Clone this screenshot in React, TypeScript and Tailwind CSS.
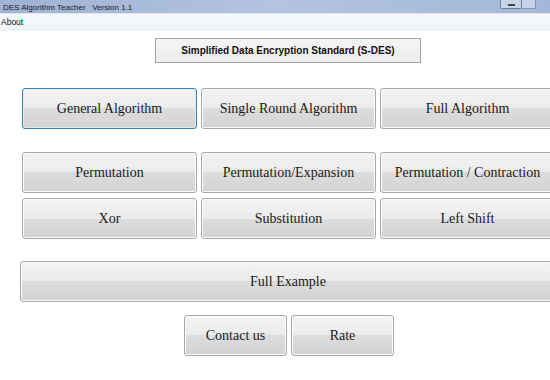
import type { ReactNode } from "react";

function WinButton({
  children,
  focused = false,
  className = "",
}: {
  children: ReactNode;
  focused?: boolean;
  className?: string;
}) {
  return (
    <button
      className={
        "flex h-[41px] items-center justify-center rounded-[3px] border bg-[linear-gradient(#f3f3f3_0%,#ebebeb_50%,#dddddd_50%,#d2d2d2_100%)] font-['Liberation_Serif',serif] text-[14px] text-[#1a1a1a] " +
        (focused
          ? "border-[#3c7fb1] shadow-[inset_0_0_0_1px_#dcecf5] "
          : "border-[#a8a8a8] shadow-[inset_0_0_0_1px_#fbfbfb] ") +
        className
      }
    >
      {children}
    </button>
  );
}

export default function App() {
  return (
    <div className="h-[380px] w-[550px] overflow-hidden bg-white">
      {/* title bar */}
      <div className="relative flex h-[13px] items-end bg-[linear-gradient(90deg,#9fb2d4,#b2c4e0_50%,#a3b7d8)] pl-[3px]">
        <span className="font-['Liberation_Sans',sans-serif] text-[8px] leading-[11px] text-[#1b1b1b]">
          DES Algorithm Teacher&nbsp;&nbsp; Version 1.1
        </span>
        <div className="absolute right-[14px] top-0 flex h-[9px]">
          <div className="flex w-[22px] items-end justify-center rounded-b-[2px] border border-t-0 border-[#6e7f9c] bg-[#c6d3e8] pb-[2px]">
            <div className="h-[2px] w-[7px] border border-[#444] bg-white" />
          </div>
          <div className="w-[14px] rounded-b-[2px] border border-l-0 border-t-0 border-[#8797b2] bg-[#c6d3e8]" />
        </div>
      </div>
      {/* menu bar */}
      <div className="flex h-[18px] items-center border-t border-[#dfe6ef] bg-[linear-gradient(#f6f8fb,#eef1f6)] font-['Liberation_Sans',sans-serif] text-[8.5px] text-[#111]">
        <span className="pl-[1px]">About</span>
      </div>

      <div className="flex justify-center pl-[26px] pt-[7px]">
        <div className="flex h-[25px] w-[266px] items-center justify-center border border-[#a0a0a0] bg-[linear-gradient(#f5f5f5,#ececec)] font-['Liberation_Sans',sans-serif] text-[10px] font-bold text-[#111]">
          Simplified Data Encryption Standard (S-DES)
        </div>
      </div>

      <div className="grid w-[600px] grid-cols-[175px_175px_175px] gap-x-[4px] pl-[22px] pt-[25px]">
        <WinButton focused>General Algorithm</WinButton>
        <WinButton>Single Round Algorithm</WinButton>
        <WinButton>Full Algorithm</WinButton>
      </div>

      <div className="grid w-[600px] grid-cols-[175px_175px_175px] gap-x-[4px] gap-y-[5px] pl-[22px] pt-[23px]">
        <WinButton>Permutation</WinButton>
        <WinButton>Permutation/Expansion</WinButton>
        <WinButton>Permutation / Contraction</WinButton>
        <WinButton>Xor</WinButton>
        <WinButton>Substitution</WinButton>
        <WinButton>Left Shift</WinButton>
      </div>

      <div className="w-[600px] pl-[20px] pt-[22px]">
        <WinButton className="w-[536px]">Full Example</WinButton>
      </div>

      <div className="flex gap-x-[4px] pl-[184px] pt-[13px]">
        <WinButton className="w-[103px]">Contact us</WinButton>
        <WinButton className="w-[103px]">Rate</WinButton>
      </div>
    </div>
  );
}
